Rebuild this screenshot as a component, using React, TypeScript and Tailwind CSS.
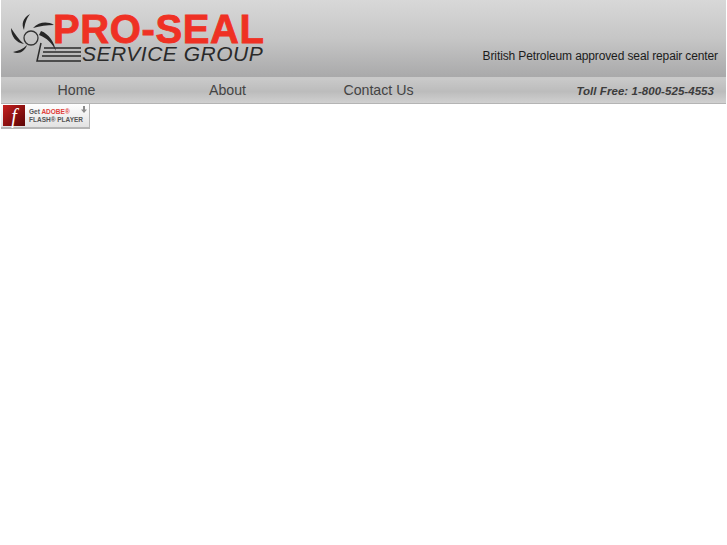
const sans = "font-['Liberation_Sans',Arial,sans-serif]";

function LogoMark() {
    return (
        <svg width="74" height="50" viewBox="0 0 74 50" className="shrink-0" fill="none">
            <circle cx="22" cy="25" r="7" stroke="#333" strokeWidth="1.3" />
            <g fill="#262626">
                <path d="M21 1 C14 5 12 11 15 17 C16 11 17 6 21 1 Z" />
                <path d="M45 12 C38 8 30 9 24 15 C31 13 38 12 45 12 Z" />
                <path d="M32 18 C40 21 45 29 47 38 C43 30 38 25 30 22 Z" />
                <path d="M2 15 C2 23 7 30 15 31 C10 27 6 21 2 15 Z" />
                <path d="M4 39 C10 42 16 38 18 32 C14 36 9 38 4 39 Z" />
            </g>
            <path d="M32 30 L28 48 H72 M35 35 H72 M34 39 H72 M33 43 H72" stroke="#2b2b2b" strokeWidth="1.5" />
        </svg>
    );
}

function FlashBadge() {
    return (
        <div className="w-[89px] h-[25px] ml-px flex items-center gap-[4px] pl-[2px] bg-gradient-to-b from-white to-[#e2e2e2] border-b-2 border-r border-[#b5b5b5] relative">
            <div className="w-[22px] h-[21px] bg-gradient-to-br from-[#c8201f] to-[#5c0505] flex items-center justify-center shrink-0">
                <span className="font-['Liberation_Serif',serif] italic text-white text-[20px] leading-none">f</span>
            </div>
            <div className={`${sans} text-[6.5px] font-bold leading-[8px] text-[#555] whitespace-nowrap`}>
                <div>Get <span className="text-[#e0403a]">ADOBE®</span></div>
                <div>FLASH® PLAYER</div>
            </div>
            <svg width="6" height="8" viewBox="0 0 6 8" className="absolute right-[2px] top-[2px]">
                <path d="M2 0H4V3.5H6L3 7L0 3.5H2Z" fill="#8a8a8a" />
            </svg>
        </div>
    );
}

export default function App() {
    return (
        <div className={`${sans} min-h-[545px] bg-white`}>
            <header className="mx-px h-[77px] bg-gradient-to-b from-[#d8d8d8] via-[#c6c6c6] to-[#a9a9aa] flex justify-between">
                <div className="flex items-start pl-[8px] pt-[13px]">
                    <LogoMark />
                    <div className="-ml-[30px]">
                        <div className="text-[40px] leading-[33px] font-bold text-[#ef3124] tracking-[0.6px] [-webkit-text-stroke:0.8px_#ef3124]">PRO-SEAL</div>
                        <div className="ml-[29px] -mt-px text-[21px] leading-[17px] italic text-[#2a2a2a] tracking-[0.5px] whitespace-nowrap">SERVICE GROUP</div>
                    </div>
                </div>
                <div className="self-end pb-[14px] pr-[8px] text-[12px] tracking-[-0.12px] leading-[14px] text-[#1c1c1c]">
                    British Petroleum approved seal repair center
                </div>
            </header>
            <nav className="mx-px h-[27px] bg-gradient-to-b from-[#c8c8c8] via-[#bcbcbc] to-[#d0d0d0] border-t-[3px] border-b border-t-[#c9c9c9] border-b-[#b4b4b4] flex items-center text-[#444] text-[14.2px]">
                <a className="w-[151px] text-center -mt-[1px]">Home</a>
                <a className="w-[151px] text-center -mt-[1px]">About</a>
                <a className="w-[151px] text-center -mt-[1px]">Contact Us</a>
                <span className="ml-auto mr-[12px] text-[11.5px] font-bold italic text-[#3c3c3c] tracking-[0.05px]">Toll Free: 1-800-525-4553</span>
            </nav>
            <FlashBadge />
        </div>
    );
}
